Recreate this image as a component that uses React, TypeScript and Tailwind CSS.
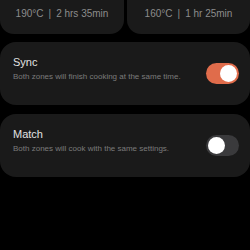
import React from "react";

function Toggle({ on }: { on: boolean }) {
  return (
    <div
      className={
        "relative w-[33px] h-[21px] rounded-full shrink-0 " +
        (on ? "bg-[#e06c4b]" : "bg-[#3a3a3c]")
      }
    >
      <div
        className={
          "absolute top-[2px] w-[17px] h-[17px] rounded-full bg-white " +
          (on ? "left-[14px]" : "left-[2px]")
        }
      />
    </div>
  );
}

function SettingCard({ title, desc, on }: { title: string; desc: string; on: boolean }) {
  return (
    <div className="h-[63px] rounded-[16px] bg-[#1a1a1a] flex justify-between pl-[13px] pr-[11px]">
      <div className="pt-[13px] flex flex-col gap-[3px]">
        <div className="text-[11px] leading-[14px] font-medium text-[#e2e2e2]">{title}</div>
        <div className="text-[8px] leading-[10px] text-[#7a7a7a]">{desc}</div>
      </div>
      <div className="self-center">
        <Toggle on={on} />
      </div>
    </div>
  );
}

function Info({ temp, time }: { temp: string; time: string }) {
  return (
    <span className="text-[10px] leading-[12px] text-[#8c8c8c] flex">
      <span>{temp}</span>
      <span className="mx-[5px]">|</span>
      <span>{time}</span>
    </span>
  );
}

export default function App() {
  return (
    <div
      className="w-[250px] h-[250px] bg-black overflow-hidden"
      style={{ fontFamily: "'Liberation Sans', Arial, sans-serif" }}
    >
      <div className="flex gap-[3px]">
        <div className="w-[124px] h-[34px] rounded-b-[14px] bg-[#1a1a1a] flex justify-center pt-[8px]">
          <Info temp="190°C" time="2 hrs 35min" />
        </div>
        <div className="flex-1 h-[34px] rounded-b-[14px] bg-[#1a1a1a] flex justify-center pt-[8px]">
          <Info temp="160°C" time="1 hr 25min" />
        </div>
      </div>
      <div className="mt-[8px] flex flex-col gap-[9px]">
        <SettingCard
          title="Sync"
          desc="Both zones will finish cooking at the same time."
          on={true}
        />
        <SettingCard
          title="Match"
          desc="Both zones will cook with the same settings."
          on={false}
        />
      </div>
    </div>
  );
}
